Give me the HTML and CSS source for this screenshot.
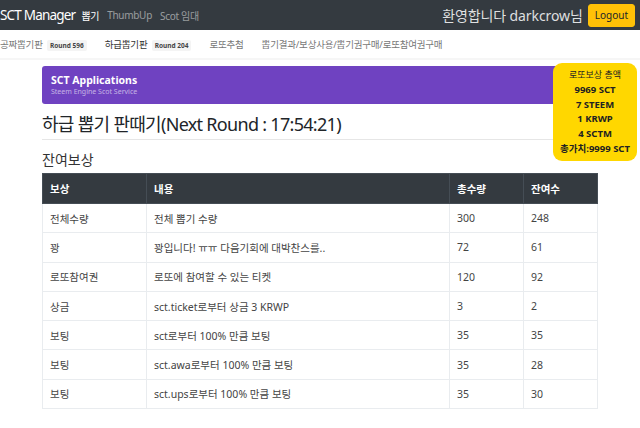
FILE: index.html
```html
<!DOCTYPE html>
<html lang="ko">
<head>
    <meta charset="UTF-8">
    <meta name="viewport" content="width=device-width, initial-scale=1.0">
    <title>SCT Manager</title>
    <link rel="stylesheet" href="styles.css">
</head>
<body>
    <nav class="topbar">
        <div class="brand">SCT Manager</div>
        <a class="nav-link active">뽑기</a>
        <a class="nav-link">ThumbUp</a>
        <a class="nav-link">Scot 임대</a>
        <div class="spacer"></div>
        <span class="welcome">환영합니다 darkcrow님</span>
        <button class="btn-logout">Logout</button>
    </nav>
    <div class="subnav">
        <a class="sub-link">공짜뽑기판 <span class="badge">Round 596</span></a>
        <a class="sub-link current">하급뽑기판 <span class="badge">Round 204</span></a>
        <a class="sub-link">로또추첨</a>
        <a class="sub-link">뽑기결과/보상사용/뽑기권구매/로또참여권구매</a>
    </div>

    <div class="container">
        <div class="app-card">
            <div class="app-title">SCT Applications</div>
            <div class="app-sub">Steem Engine Scot Service</div>
        </div>
        <h1 class="title">하급 뽑기 판때기(Next Round : 17:54:21)</h1>
        <h2 class="section">잔여보상</h2>
        <table class="rewards">
            <thead>
                <tr>
                    <th class="c1">보상</th>
                    <th class="c2">내용</th>
                    <th class="c3">총수량</th>
                    <th class="c4">잔여수</th>
                </tr>
            </thead>
            <tbody>
                <tr><td>전체수량</td><td>전체 뽑기 수량</td><td>300</td><td>248</td></tr>
                <tr><td>꽝</td><td>꽝입니다! ㅠㅠ 다음기회에 대박찬스를..</td><td>72</td><td>61</td></tr>
                <tr><td>로또참여권</td><td>로또에 참여할 수 있는 티켓</td><td>120</td><td>92</td></tr>
                <tr><td>상금</td><td>sct.ticket로부터 상금 3 KRWP</td><td>3</td><td>2</td></tr>
                <tr><td>보팅</td><td>sct로부터 100% 만큼 보팅</td><td>35</td><td>35</td></tr>
                <tr><td>보팅</td><td>sct.awa로부터 100% 만큼 보팅</td><td>35</td><td>28</td></tr>
                <tr><td>보팅</td><td>sct.ups로부터 100% 만큼 보팅</td><td>35</td><td>30</td></tr>
            </tbody>
        </table>
    </div>

    <div class="lotto">
        <div class="lotto-head">로또보상 총액</div>
        <div>9969 SCT</div>
        <div>7 STEEM</div>
        <div>1 KRWP</div>
        <div>4 SCTM</div>
        <div>총가치:9999 SCT</div>
    </div>
</body>
</html>
```

FILE: styles.css
```css
body {
    margin: 0;
    font-family: "Noto Sans", "Noto Sans CJK KR", sans-serif;
    color: #212529;
    background: #fff;
}
.topbar {
    display: flex;
    align-items: center;
    height: 30px;
    background: #343a40;
    padding: 0 5px 0 0;
}
.brand {
    color: #fff;
    font-size: 13.5px;
    letter-spacing: -0.8px;
    margin-right: 2px;
}
.nav-link {
    color: rgba(255, 255, 255, 0.5);
    font-size: 10px;
    letter-spacing: -0.3px;
    margin: 0 4px;
}
.nav-link.active {
    color: #fff;
}
.spacer {
    flex: 1;
}
.welcome {
    color: rgba(255, 255, 255, 0.85);
    font-size: 14px;
    letter-spacing: -0.1px;
    margin-right: 5px;
}
.btn-logout {
    background: #ffc107;
    border: 1px solid #ffc107;
    border-radius: 3px;
    color: #212529;
    font-family: inherit;
    font-size: 10px;
    padding: 0 6px;
    height: 23px;
}
.subnav {
    display: flex;
    align-items: center;
    height: 28px;
    border-bottom: 2px solid #f6f6f6;
    font-size: 9.5px;
    letter-spacing: -0.2px;
}
.sub-link {
    color: #777;
    margin-right: 18px;
}
.sub-link.current {
    color: #333;
}
.badge {
    display: inline-block;
    background: #f4f4f4;
    color: #444;
    font-size: 6.5px;
    font-weight: bold;
    letter-spacing: 0;
    padding: 1px 3px;
    border-radius: 2px;
    margin-left: 2px;
}
.container {
    width: 556px;
    margin: 0 auto;
    padding-top: 6px;
}
.app-card {
    background: #6f42c1;
    border-radius: 3px;
    height: 38px;
    padding: 0 9px;
    display: flex;
    flex-direction: column;
    justify-content: center;
    color: #fff;
}
.app-title {
    font-size: 10.5px;
    font-weight: bold;
    line-height: 13px;
}
.app-sub {
    font-size: 7px;
    color: rgba(255, 255, 255, 0.6);
    line-height: 9px;
}
.title {
    font-size: 18px;
    font-weight: normal;
    letter-spacing: -0.7px;
    margin: 7px 0 0;
    padding-bottom: 2px;
    border-bottom: 1px solid #e6e6e6;
    line-height: 26px;
}
.section {
    font-size: 14px;
    font-weight: normal;
    margin: 10px 0 3px;
    color: #333;
    line-height: 20px;
}
.rewards {
    width: 556px;
    border-collapse: collapse;
    font-size: 10.5px;
}
.rewards th {
    background: #343a40;
    color: #fff;
    text-align: left;
    font-weight: bold;
    height: 29px;
    padding: 0 7px;
    border: 1px solid #454d55;
}
.rewards td {
    height: 28.3px;
    padding: 0 7px;
    border: 1px solid #e9ecef;
    color: #444;
}
.c1 { width: 89px; }
.c2 { width: 288px; }
.c3 { width: 59px; }
.lotto {
    position: absolute;
    top: 63px;
    right: 3px;
    width: 84px;
    padding: 5px 0 4px;
    background: #ffd700;
    border-radius: 9px;
    text-align: center;
    font-size: 9.5px;
    font-weight: bold;
    line-height: 14.8px;
    color: #222;
}
.lotto-head {
    font-weight: normal;
    font-size: 9px;
}
```
